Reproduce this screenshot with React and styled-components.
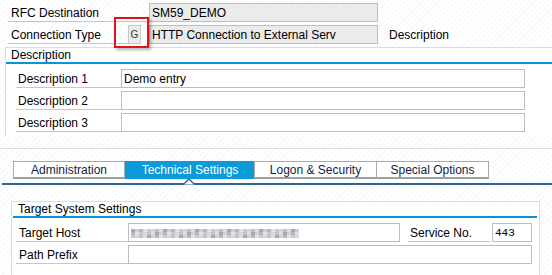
import React from 'react';
import styled, { createGlobalStyle } from 'styled-components';

const GlobalStyle = createGlobalStyle`
  html, body {
    margin: 0;
    padding: 0;
    overflow: hidden;
  }
  body {
    font-family: "Liberation Sans", Arial, sans-serif;
    font-size: 12px;
    color: #000;
    background: repeating-linear-gradient(135deg, #ffffff 0 3px, #f5f7f9 3px 4px);
  }
`;

const blurShades = ['#c9c9d1', '#d8d8de', '#b6b6c0', '#e2e2e8', '#a8a8b4', '#cfd0d8', '#bfc0ca', '#dcdce2'];

const blurCells = (() => {
  const cells = [];
  let seed = 7;
  for (let row = 0; row < 3; row++) {
    for (let col = 0; col < 42; col++) {
      seed = (seed * 9301 + 49297) % 233280;
      cells.push({ x: col * 4, y: row * 3, fill: blurShades[seed % blurShades.length] });
    }
  }
  return cells;
})();

const App = () => {
  return (
    <>
      <GlobalStyle />
      <Screen>
        <Header>
          <FieldRow>
            <Label width={141}>RFC Destination</Label>
            <Input width={229} $readOnly>SM59_DEMO</Input>
          </FieldRow>
          <FieldRow>
            <Label width={120}>Connection Type</Label>
            <KeyWrap>
              <KeyBox>G</KeyBox>
              <Highlight />
            </KeyWrap>
            <Input width={229} $readOnly $gap={8}>HTTP Connection to External Serv</Input>
            <SideText>Description</SideText>
          </FieldRow>
        </Header>

        <DescGroup>
          <GroupTitle>Description</GroupTitle>
          <GroupBody $left={10}>
            <FieldRow>
              <Label width={105} $pad={2}>Description 1</Label>
              <Input width={404}>Demo entry</Input>
            </FieldRow>
            <FieldRow>
              <Label width={105} $pad={2}>Description 2</Label>
              <Input width={404} />
            </FieldRow>
            <FieldRow>
              <Label width={105} $pad={2}>Description 3</Label>
              <Input width={404} />
            </FieldRow>
          </GroupBody>
        </DescGroup>

        <TabArea>
          <TabRow>
            <Tab width={112}>Administration</Tab>
            <Tab width={130} $active>
              Technical Settings
              <Caret width="12" height="7" viewBox="0 0 12 7">
                <path d="M0.5 6.5 L6 1 L11.5 6.5" fill="#fff" stroke="#2f6592" strokeWidth="1.3" />
              </Caret>
            </Tab>
            <Tab width={123}>Logon &amp; Security</Tab>
            <Tab width={113}>Special Options</Tab>
          </TabRow>
          <TabLine />

          <Panel>
            <SettingsGroup>
              <GroupTitle $inset>Target System Settings</GroupTitle>
              <GroupBody $left={4}>
                <FieldRow>
                  <Label width={112} $pad={3}>Target Host</Label>
                  <Input width={272}>
                    <svg width="168" height="9" viewBox="0 0 168 9">
                      {blurCells.map((c, i) => (
                        <rect key={i} x={c.x} y={c.y} width="4" height="3" fill={c.fill} />
                      ))}
                    </svg>
                  </Input>
                  <Label width={82} $pad={2} $gap={8}>Service No.</Label>
                  <Input width={40} $gap={2} $mono>443</Input>
                </FieldRow>
                <FieldRow>
                  <Label width={112} $pad={3}>Path Prefix</Label>
                  <Input width={404} />
                </FieldRow>
              </GroupBody>
            </SettingsGroup>
          </Panel>
        </TabArea>
      </Screen>
    </>
  );
};

export default App;

const Screen = styled.div`
  width: 552px;
  height: 275px;
  overflow: hidden;
`;

const Header = styled.div`
  padding: 3px 0 0 8px;
  display: flex;
  flex-direction: column;
  gap: 3px;
`;

const FieldRow = styled.div`
  display: flex;
  align-items: stretch;
  height: 19px;
`;

const Label = styled.div`
  box-sizing: border-box;
  width: ${(p) => p.width}px;
  margin-left: ${(p) => p.$gap || 0}px;
  padding-left: ${(p) => (p.$pad !== undefined ? p.$pad : 3)}px;
  padding-top: 1px;
  border-bottom: 1px solid #c6c6c6;
  line-height: 18px;
  white-space: nowrap;
  flex-shrink: 0;
`;

const Input = styled.div`
  box-sizing: border-box;
  width: ${(p) => p.width}px;
  margin-left: ${(p) => p.$gap || 0}px;
  padding: 1px 0 0 2px;
  border: 1px solid #bdbdbd;
  background: ${(p) => (p.$readOnly ? '#ebebeb' : '#fff')};
  line-height: 16px;
  white-space: nowrap;
  overflow: hidden;
  flex-shrink: 0;
  display: flex;
  align-items: center;
  font-family: ${(p) => (p.$mono ? '"Liberation Mono", "Courier New", monospace' : 'inherit')};
  font-size: ${(p) => (p.$mono ? '11px' : 'inherit')};
`;

const KeyWrap = styled.div`
  position: relative;
  width: 13px;
  flex-shrink: 0;
`;

const KeyBox = styled.div`
  box-sizing: border-box;
  height: 100%;
  border: 1px solid #c8c8c8;
  background: #ebebeb;
  font-size: 10px;
  color: #333;
  display: flex;
  align-items: center;
  justify-content: center;
`;

const Highlight = styled.div`
  position: absolute;
  left: -14px;
  top: -8px;
  width: 35px;
  height: 31px;
  box-sizing: border-box;
  border: 2px solid #e3131b;
  box-shadow: 2px 2px 3px rgba(0, 0, 0, 0.3);
`;

const SideText = styled.div`
  margin-left: 11px;
  padding-top: 1px;
  line-height: 19px;
`;

const DescGroup = styled.div`
  margin: 3px 0 0 5px;
  width: 600px;
  border-top: 1px solid #dcdcdc;
  border-left: 1px solid #dcdcdc;
  background: #fff;
  padding-bottom: 4px;
`;

const GroupTitle = styled.div`
  height: 14px;
  line-height: 15px;
  padding-left: 5px;
  margin: ${(p) => (p.$inset ? '0 2px 0 1px' : '0')};
  border-bottom: 2px solid #0a93d9;
  white-space: nowrap;
`;

const GroupBody = styled.div`
  padding: 5px 0 0 ${(p) => p.$left}px;
  display: flex;
  flex-direction: column;
  gap: 3px;
`;

const TabArea = styled.div`
  margin-top: 12px;
  border-top: 1px solid #dcdcdc;
  padding-top: 12px;
`;

const TabRow = styled.div`
  display: flex;
  padding-left: 13px;
  height: 18px;
`;

const Tab = styled.div`
  position: relative;
  box-sizing: border-box;
  width: ${(p) => p.width}px;
  height: 18px;
  margin-left: ${(p) => (p.$active ? 0 : -1)}px;
  background: ${(p) => (p.$active ? '#0c9adb' : '#fff')};
  color: ${(p) => (p.$active ? '#fff' : '#12224a')};
  border: ${(p) => (p.$active ? 'none' : '1px solid #a9a9a9')};
  border-bottom: ${(p) => (p.$active ? 'none' : '2px solid #a0a0a0')};
  display: flex;
  align-items: center;
  justify-content: center;
  white-space: nowrap;
  &:first-child {
    margin-left: 0;
  }
`;

const Caret = styled.svg`
  position: absolute;
  left: 50%;
  margin-left: -7px;
  bottom: -6px;
`;

const TabLine = styled.div`
  margin: 4px 0 0 2px;
  height: 2px;
  background: #2f6592;
`;

const Panel = styled.div`
  padding: 16px 0 0 11px;
`;

const SettingsGroup = styled.div`
  width: 527px;
  height: 120px;
  border: 1px solid #dcdcdc;
  background: #fff;
`;
